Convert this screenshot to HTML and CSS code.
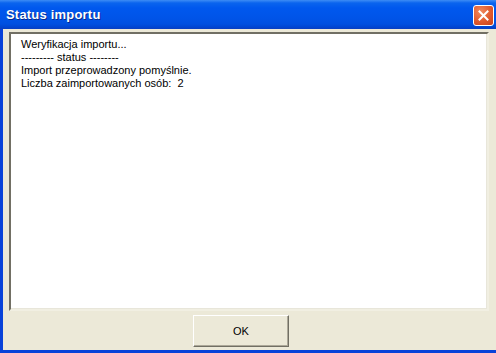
FILE: index.html
```html
<!DOCTYPE html>
<html lang="pl">
<head>
    <meta charset="utf-8">
    <title>Status importu</title>
    <link rel="stylesheet" href="styles.css">
</head>
<body>
    <div class="window">
        <div class="titlebar">
            <span class="title">Status importu</span>
            <button class="close-button" title="Zamknij">
                <svg width="11" height="11" viewBox="0 0 11 11">
                    <path d="M1.5 1.5 L9.5 9.5 M9.5 1.5 L1.5 9.5" stroke="#fff" stroke-width="2" stroke-linecap="square"/>
                </svg>
            </button>
        </div>
        <div class="window-body">
            <div class="log">
                <p>Weryfikacja importu...</p>
                <p>--------- status --------</p>
                <p>Import przeprowadzony pomyślnie.</p>
                <p>Liczba zaimportowanych osób:&nbsp; 2</p>
            </div>
            <button class="ok-button">OK</button>
        </div>
    </div>
</body>
</html>
```

FILE: styles.css
```css
body {
    margin: 0;
    font-family: "Liberation Sans", Arial, sans-serif;
    font-size: 11px;
    background-color: #ece9d8;
}

.window {
    width: 496px;
    height: 353px;
    display: flex;
    flex-direction: column;
    overflow: hidden;
}

.titlebar {
    height: 29px;
    flex-shrink: 0;
    display: flex;
    align-items: center;
    justify-content: space-between;
    padding-left: 6px;
    padding-right: 2px;
    background: linear-gradient(to bottom,
        #3d8cf5 0px, #0a64ee 3px, #0058ee 8px, #0054e8 18px,
        #0050e0 24px, #0046d2 27px, #0a3fc0 29px);
}

.title {
    color: #fff;
    font-weight: bold;
    font-size: 13px;
    letter-spacing: 0.2px;
    text-shadow: 1px 1px 0 #0a2a8c;
}

.close-button {
    width: 21px;
    height: 21px;
    padding: 0;
    border: 1px solid #fff;
    border-radius: 3px;
    background: radial-gradient(circle at 35% 30%, #f08a5f 0%, #e05a2e 55%, #c7401a 100%);
    display: flex;
    align-items: center;
    justify-content: center;
    margin-top: 1px;
}

.window-body {
    flex: 1;
    display: flex;
    flex-direction: column;
    border-left: 3px solid #0842d9;
    border-bottom: 3px solid #0842d9;
    padding: 3px 7px 3px 6px;
}

.log {
    height: 279px;
    box-sizing: border-box;
    background-color: #fff;
    border-top: 2px solid #716f64;
    border-left: 2px solid #716f64;
    border-right: 2px solid #f1efe2;
    border-bottom: 2px solid #f1efe2;
    box-shadow: inset -1px -1px 0 #e8e6da;
    padding: 4px 10px;
}

.log p {
    margin: 0;
    line-height: 13px;
    color: #000;
}

.ok-button {
    margin-top: 4px;
    margin-left: 184px;
    width: 96px;
    height: 32px;
    font-family: "Liberation Sans", Arial, sans-serif;
    font-size: 11px;
    color: #000;
    background-color: #ece9d8;
    border-top: 1px solid #fff;
    border-left: 1px solid #fff;
    border-right: 1px solid #716f64;
    border-bottom: 1px solid #716f64;
    box-shadow: inset -1px -1px 0 #aca899;
    padding: 0;
}
```
